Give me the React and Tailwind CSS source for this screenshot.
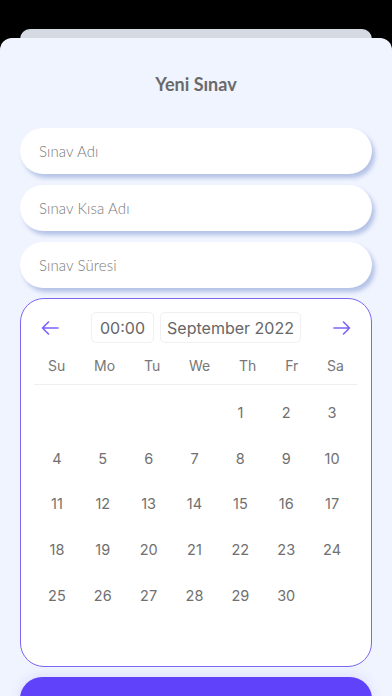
import React from "react";

const days = [
    null, null, null, null, 1, 2, 3,
    4, 5, 6, 7, 8, 9, 10,
    11, 12, 13, 14, 15, 16, 17,
    18, 19, 20, 21, 22, 23, 24,
    25, 26, 27, 28, 29, 30, null,
];

const weekDays = ["Su", "Mo", "Tu", "We", "Th", "Fr", "Sa"];

function Arrow({ flip }) {
    return (
        <svg width="18" height="14" viewBox="0 0 18 14" fill="none" className={flip ? "rotate-180" : ""}>
            <path d="M17 7H1.5M7.5 1L1.5 7L7.5 13" stroke="#7b63fb" strokeWidth="1.6" strokeLinecap="round" strokeLinejoin="round" />
        </svg>
    );
}

function Field({ label }) {
    return (
        <div className="h-[46px] rounded-full bg-white flex items-center px-[19px] shadow-[3px_4px_4px_rgba(160,178,222,0.75)]">
            <span className="text-[15px] text-[#7a7a7a] font-light tracking-[0.1px]">{label}</span>
        </div>
    );
}

export default function App() {
    return (
        <div className="h-[696px] overflow-hidden bg-black pt-[29px] flex flex-col" style={{ fontFamily: "Lato, 'Noto Sans', sans-serif" }}>
            <div className="mx-[20px] h-[20px] rounded-t-[10px] bg-[#d5d9e1] shrink-0" />
            <div className="-mt-[11px] flex-1 rounded-t-[12px] bg-[#f0f4ff] px-[20px] pt-[34px]">
                <h1 className="text-center text-[18px] leading-[24px] font-bold text-[#6a6a6a]">Yeni Sınav</h1>

                <div className="mt-[32px] flex flex-col gap-[11px]">
                    <Field label="Sınav Adı" />
                    <Field label="Sınav Kısa Adı" />
                    <Field label="Sınav Süresi" />
                </div>

                {/* takvim */}
                <div className="mt-[10px] h-[369px] rounded-[24px] border border-[#7b66f6] bg-white pt-[13px]" style={{ fontFamily: "Inter, Roboto, sans-serif" }}>
                    <div className="flex items-center justify-between px-[20px]">
                        <Arrow />
                        <div className="flex gap-[6px]">
                            <div className="h-[31px] w-[63px] rounded-[5px] border border-[#f0f0f0] flex items-center justify-center text-[16px] text-[#666]">00:00</div>
                            <div className="h-[31px] w-[141px] rounded-[5px] border border-[#f0f0f0] flex items-center justify-center text-[16px] text-[#666]">September 2022</div>
                        </div>
                        <Arrow flip />
                    </div>

                    <div className="mx-[13px] mt-[13px] flex justify-between px-[14px] text-[14px] leading-[20px] text-[#777]">
                        {weekDays.map((d) => (
                            <span key={d}>{d}</span>
                        ))}
                    </div>
                    <div className="mx-[13px] mt-[8px] w-[323px] border-b border-[#eeeeee]" />

                    <div className="ml-[13px] mt-[5px] grid w-[321px] grid-cols-7">
                        {days.map((d, i) => (
                            <div key={i} className="h-[45.7px] flex items-center justify-center text-[14.5px] text-[#707070]">
                                {d}
                            </div>
                        ))}
                    </div>
                </div>

                <button className="mt-[10px] h-[50px] w-full rounded-[22px] bg-[#5f42fa] text-white font-semibold text-[16px] shadow-[0_-2px_12px_rgba(96,66,250,0.12)]">
                    Kaydet
                </button>
            </div>
        </div>
    );
}
